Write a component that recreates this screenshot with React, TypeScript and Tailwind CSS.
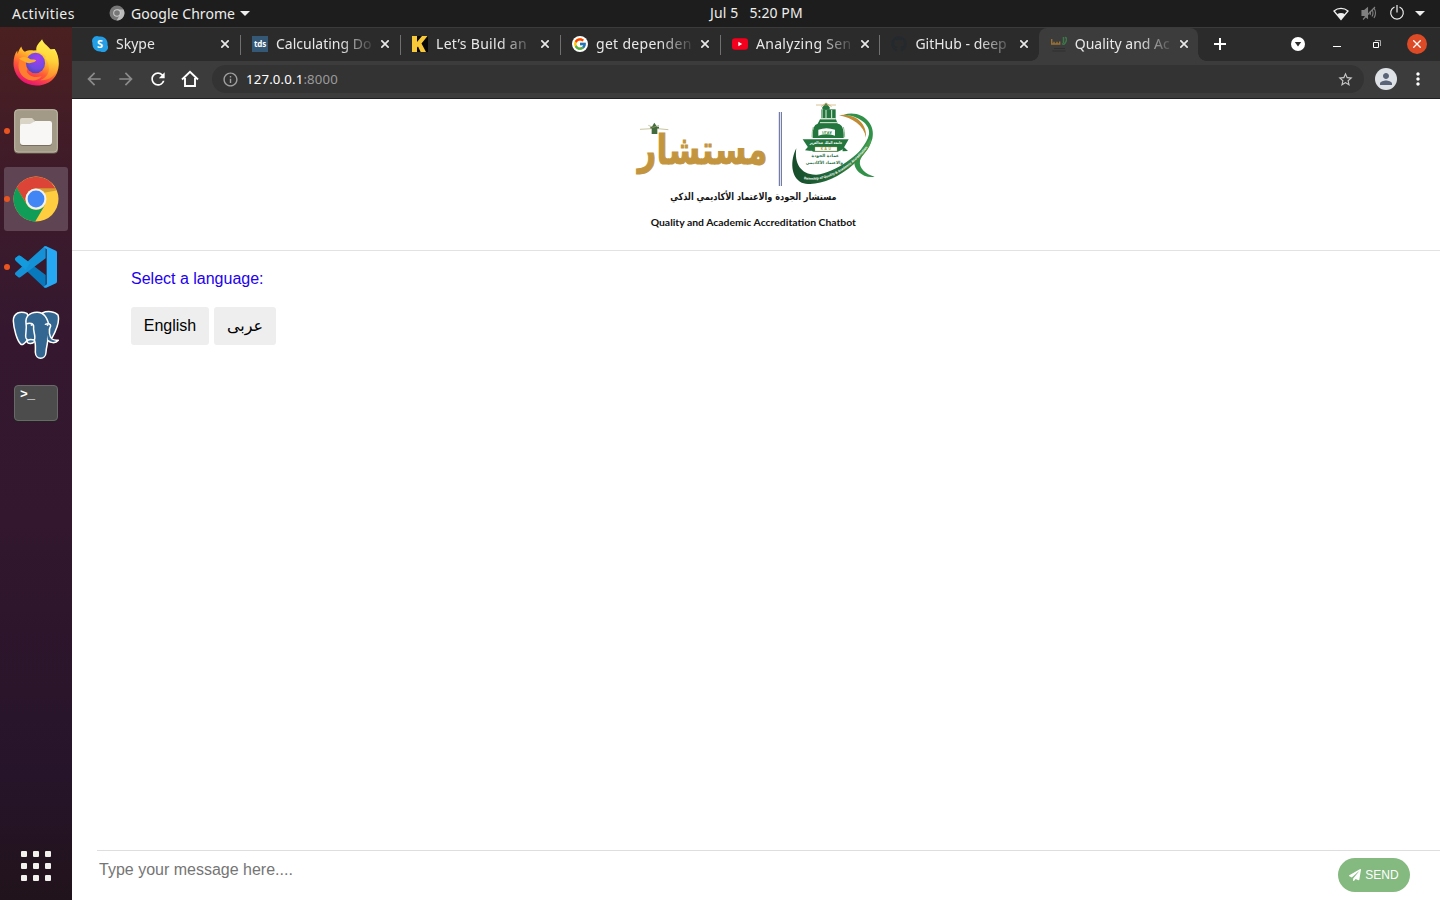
import React from "react";
import { FcGoogle } from "react-icons/fc";
import { FaGithub, FaPaperPlane } from "react-icons/fa";
import { MdArrowBack, MdArrowForward, MdRefresh, MdStarBorder, MdInfoOutline, MdMoreVert, MdPerson } from "react-icons/md";

const FirefoxIcon = () => (
  <svg width="46" height="47" viewBox="39 32 139 141" className="-mt-[2px]">
    <defs>
      <linearGradient id="ffBody" x1="0.8" y1="0" x2="0.25" y2="1">
        <stop offset="0" stopColor="#fff44f" />
        <stop offset="0.35" stopColor="#ffb52a" />
        <stop offset="0.62" stopColor="#ff5a36" />
        <stop offset="1" stopColor="#e6067b" />
      </linearGradient>
      <linearGradient id="ffTail" x1="0.5" y1="0" x2="0.4" y2="1">
        <stop offset="0" stopColor="#fff350" />
        <stop offset="0.5" stopColor="#ffd23a" />
        <stop offset="1" stopColor="#ff7a2c" />
      </linearGradient>
      <radialGradient id="ffGlobe" cx="0.6" cy="0.3" r="0.8">
        <stop offset="0" stopColor="#a23cf0" />
        <stop offset="0.6" stopColor="#6f4be0" />
        <stop offset="1" stopColor="#4a3fa8" />
      </radialGradient>
    </defs>
    <path d="M64 54C66 62 70 67 75 70C82 66 92 65 100 66L165 62C179 84 181 110 172 134C161 160 137 172 109 172C75 172 46 150 41 114C39 93 44 75 52 66L53 77C55 69 59 60 64 54Z" fill="url(#ffBody)" />
    <path d="M127 32C131 48 149 52 157 71L160 63C174 79 179 105 173 124C164 148 143 158 121 156C134 151 144 142 147 128C150 110 143 95 134 88L140 86C133 78 123 71 111 69C104 55 119 42 127 32Z" fill="url(#ffTail)" />
    <path d="M62 89C72 84 84 87 91 93C98 94 106 93 109 96C106 105 96 104 88 110C83 119 80 122 81 131C88 144 108 151 126 143C116 159 90 162 71 146C54 132 51 106 62 89Z" fill="#ff7e2f" />
    <ellipse cx="107" cy="104" rx="29" ry="31" fill="url(#ffGlobe)" />
    <path d="M57 91C67 84 82 84 91 93C98 94 106 93 109 96C106 103 96 103 88 105C77 103 68 97 57 91Z" fill="#ffae2b" />
  </svg>
);

const FilesIcon = () => (
  <svg width="46" height="46" viewBox="0 0 46 46">
    <rect x="1" y="1.5" width="44" height="44" rx="4" fill="#77705f" />
    <rect x="1.7" y="1.7" width="42.6" height="42.4" rx="3.5" fill="#a29a86" stroke="#c2bba8" />
    <path d="M7 12q0-2 2-2h10l3 3v6H7Z" fill="#d9d4c5" />
    <path d="M7 19q0-2 2-2h8l5-4h15q2 0 2 2v20q0 3-3 3H10q-3 0-3-3Z" fill="#78705e" />
    <path d="M7 18q0-2 2-2h8l5-3h15q2 0 2 2v19q0 3-3 3H10q-3 0-3-3Z" fill="#f8f7f5" />
  </svg>
);

const ChromeIcon = () => (
  <svg width="46" height="46" viewBox="0 0 46 46">
    <circle cx="23" cy="23" r="22.5" fill="#ffcd40" />
    <path d="M3.5 11.8A22.5 22.5 0 0 1 42.5 12.5H23A10.7 10.7 0 0 0 13.6 28Z" fill="#db4437" />
    <path d="M3.7 11.5A22.5 22.5 0 0 0 22.2 45.5L32.3 28.5A10.8 10.8 0 0 1 13.5 28Z" fill="#0f9d58" />
    <path d="M23 12.5h19.5l.9 2-14 2.5Z" fill="#a87422" opacity=".5" />
    <circle cx="23" cy="23" r="10.5" fill="#f1f1f1" />
    <circle cx="23" cy="23" r="8.4" fill="#4285f4" />
  </svg>
);

const CodeIcon = () => (
  <svg width="44" height="44" viewBox="42 27 132 132">
    <path d="M46 66L55 59Q58 57 62 60L137 117V156Q134 156 131 153L48 75Q43 71 46 66Z" fill="#0879bd" />
    <path d="M46 116L55 124Q58 126 62 123L137 67V30Q134 30 131 33L48 108Q43 112 46 116Z" fill="#1592d7" />
    <path d="M46 66L55 59Q58 57 62 60L90 81L77 101L48 75Q43 71 46 66Z" fill="#149bde" />
    <path d="M137 30L168 44Q171 46 171 50V136Q171 140 168 142L137 156Q141 153 141 148V38Q141 33 137 30Z" fill="#27a8f2" />
    <path d="M131 33Q137 28 141 33V153Q137 158 131 153L140 145V40Z" fill="#27a8f2" />
  </svg>
);

const ElephantIcon = () => (
  <svg width="48" height="50" viewBox="37 223 144 150">
    <g fill="#336791" stroke="#fff" strokeWidth="4.5" strokeLinejoin="round" strokeLinecap="round">
      <path d="M82 233C62 225 41 231 41 256C42 278 52 316 64 326C70 330 76 321 83 313L92 265Z" />
      <path d="M128 232C143 225 166 227 175 238C181 257 168 287 157 307L146 309L130 280Z" />
      <path d="M79 262C77 242 89 231 111 230C135 229 145 248 149 278C150 290 144 299 144 309C146 321 140 329 139 350C138 374 108 374 107 350C107 337 109 325 104 313C97 321 83 317 79 307C75 296 83 284 79 262Z" />
      <path d="M81 264C90 261 102 263 102 273C99 286 110 302 104 313C95 311 84 310 81 318C87 327 99 324 104 318M137 266C147 262 153 266 153 271C145 283 150 304 157 310C163 314 169 313 176 314C166 326 151 320 145 315" />
      <circle cx="95" cy="268" r="1.5" strokeWidth="3" />
      <circle cx="143" cy="268" r="1.5" strokeWidth="3" />
    </g>
  </svg>
);

const TerminalIcon = () => (
  <div className="flex h-9 w-11 rounded border border-[#686968] bg-[#4b4c4b] pl-[5px] font-['Liberation_Mono'] text-[13px] font-bold leading-[17px] tracking-[-0.5px] text-white shadow-[0_1px_1px_#242323]">
    &gt;_
  </div>
);

const dockItems = [
  { icon: <FirefoxIcon />, running: false, active: false },
  { icon: <FilesIcon />, running: true, active: false },
  { icon: <ChromeIcon />, running: true, active: true },
  { icon: <CodeIcon />, running: true, active: false },
  { icon: <ElephantIcon />, running: false, active: false },
  { icon: <TerminalIcon />, running: false, active: false },
];

const Dock = () => (
  <aside className="flex w-[72px] shrink-0 flex-col items-center gap-1 bg-[linear-gradient(#4b2020_0px,#3e1b2a_150px,#35182f_300px,#32172e_500px,#26142a_750px,#21131b_873px)] pt-1">
    {dockItems.map((item, i) => (
      <div key={i} className={`relative flex size-16 items-center justify-center rounded-[3px] ${item.active ? "bg-[#5f4453]" : ""}`}>
        {item.running && <span className="absolute top-[29px] left-0 size-1.5 rounded-full bg-[#e95420]" />}
        {item.icon}
      </div>
    ))}
    <div className="mt-auto mb-[19px] grid grid-cols-3 gap-1.5">
      {Array.from({ length: 9 }, (_, i) => (
        <span key={i} className="size-1.5 rounded-[1px] bg-[#f2f1ed]" />
      ))}
    </div>
  </aside>
);

const SystemBar = () => (
  <header className="flex h-[27px] shrink-0 items-center bg-[#1d1d1d] font-['Noto_Sans',sans-serif] text-[14px] text-[#eeeeec]">
    <div className="flex w-[710px] items-center pl-3">
      <span className="w-[97px] tracking-[0.45px]">Activities</span>
      <svg width="16" height="16" viewBox="0 0 16 16" className="-mt-px">
        <circle cx="8" cy="8" r="7.5" fill="#777" />
        <path d="M8 4.5h6.5A7.5 7.5 0 0 1 7.5 15.5l3.2-5.2Z" fill="#bbb" />
        <circle cx="8" cy="8" r="3.8" fill="#ccc" />
        <circle cx="8" cy="8" r="2.8" fill="#777" />
      </svg>
      <span className="ml-1.5 w-[109px] whitespace-nowrap tracking-[0.05px]">Google Chrome</span>
      <svg width="10" height="5" viewBox="0 0 10 5"><path d="M0 0h10L5 5Z" fill="#eee" /></svg>
    </div>
    <span className="-mt-0.5 whitespace-pre text-[14px] tracking-[0.1px]">Jul 5   5:20 PM</span>
    <div className="mr-[15px] ml-auto flex items-center">
      <svg width="16" height="14" viewBox="0 0 16 14" className="mr-3">
        <path d="M1 4C5 .5 11 .5 15 4L8 12.5Z" fill="none" stroke="#eee" strokeWidth="1.3" />
        <path d="M4 7.3Q8 4.5 12 7.3L8 12.5Z" fill="#eee" />
      </svg>
      <svg width="16" height="16" viewBox="0 0 16 16" className="mr-3 -mt-px" fill="none" stroke="#808080" strokeWidth="1.1">
        <path d="M1 5.5h2.5L6.5 3v10l-3-2.5H1Z" fill="#808080" />
        <path d="M9 6q1 2 0 4M11 4.5q2 3.5 0 7M13 3q3 5 0 10M2 14.5L14 2" />
      </svg>
      <svg width="16" height="16" viewBox="0 0 16 16" className="mr-[10px] -mt-px" fill="none" stroke="#eee" strokeWidth="1.2">
        <path d="M5.5 2A6.3 6.3 0 1 0 10.5 2M8 0v7.5" />
      </svg>
      <svg width="10" height="5" viewBox="0 0 10 5"><path d="M0 0h10L5 5Z" fill="#eee" /></svg>
    </div>
  </header>
);

const CloseIcon = () => (
  <svg width="8" height="8" viewBox="0 0 8 8" fill="none" stroke="currentColor" strokeWidth="1.7" className="shrink-0">
    <path d="M.3.3l7.4 7.4M7.7.3L.3 7.7" />
  </svg>
);

const SkypeIcon = () => (
  <svg width="16" height="16" viewBox="0 0 16 16">
    <path d="M5 0A5 5 0 0 0 .5 7A7.5 7.5 0 0 0 8.5 15.5A5 5 0 0 0 15.5 9A7.5 7.5 0 0 0 7 .5Z" fill="#249fe5" />
    <text x="8" y="12" textAnchor="middle" fontFamily="Noto Sans" fontWeight="700" fontSize="11" fill="#fff">S</text>
  </svg>
);
const KIcon = () => (
  <svg width="16" height="16" viewBox="0 0 16 16">
    <path fill="#080808" d="M0 0h16v16H0z" />
    <path fill="#f8c83b" d="M0 0h5v6l5-6h5.5L9.5 7.5 14 16H8.7L6 10.5l-1 1V16H0z" />
  </svg>
);
const YoutubeIcon = () => (
  <svg width="16" height="16" viewBox="0 0 16 16">
    <rect y="2.2" width="16" height="11.6" rx="3" fill="#f4001e" />
    <path d="M6.3 5.8v4.4L10.2 8Z" fill="#fff" />
  </svg>
);
const SiteIcon = () => (
  <svg width="16" height="16" viewBox="0 0 16 16" fill="none">
    <path d="M.7 3v5h8V5.5M3 7.5V5.7M6 7.5V5.7" stroke="#9a7133" strokeWidth="1.4" />
    <path d="M11 7.5q2.5 2 4-2T14 1.5M12.5 1v6" stroke="#3b7749" strokeWidth="1.5" />
    <path d="M3 12.5h11M1.5 15h13" stroke="#2d2b2c" strokeWidth=".8" />
  </svg>
);

const tabs = [
  { title: "Skype", icon: <SkypeIcon /> },
  { title: "Calculating Do", icon: <span className="flex size-4 items-center justify-center bg-[#355876] pb-px text-[8px] font-bold tracking-tight text-white">tds</span> },
  { title: "Let’s Build an", icon: <KIcon /> },
  { title: "get dependen", icon: <span className="flex size-4 items-center justify-center rounded-full bg-white"><FcGoogle size={14} /></span> },
  { title: "Analyzing Sen", icon: <YoutubeIcon /> },
  { title: "GitHub - deep", icon: <FaGithub size={16} color="#24292e" /> },
  { title: "Quality and Ac", icon: <SiteIcon /> },
];

const TabStrip = () => (
  <div className="flex h-[34px] border-t border-[#3b3b3b] bg-[#2b2b2b] pl-2 font-['Noto_Sans',sans-serif] text-[14px] text-[#e8e8e8]">
    {tabs.map((tab, i) => (
      <div
        key={tab.title}
        className={`relative flex shrink-0 items-center pl-3 ${i < 4 ? "w-40" : "w-[159.4px]"} ${i === 6 ? "rounded-t-lg bg-[#3c3c3c]" : ""}`}
      >
        {i === 6 && (
          <>
            <span className="absolute bottom-0 -left-2 size-2 bg-[radial-gradient(circle_at_0_0,transparent_7.5px,#3c3c3c_8px)]" />
            <span className="absolute -right-2 bottom-0 size-2 bg-[radial-gradient(circle_at_100%_0,transparent_7.5px,#3c3c3c_8px)]" />
          </>
        )}
        <span className="-mt-px flex size-4 shrink-0">{tab.icon}</span>
        <span className={`-mt-[3px] ml-2 w-[98px] overflow-hidden whitespace-nowrap [mask-image:linear-gradient(to_right,black_64px,transparent_100px)] ${i === 2 || i === 3 || i === 4 ? "tracking-[0.3px]" : ""}`}>
          {tab.title}
        </span>
        <span className="-mt-px ml-[7px] flex"><CloseIcon /></span>
        {i < 5 && <span className="absolute top-[7px] right-[-1px] h-5 w-px bg-[#707070]" />}
      </div>
    ))}
    <svg width="12" height="12" viewBox="0 0 12 12" className="mt-2.5 ml-4" stroke="#fff" strokeWidth="2">
      <path d="M0 6h12M6 0v12" />
    </svg>
    <div className="mr-[13px] ml-auto flex items-center pb-px">
      <svg width="14" height="14" viewBox="0 0 14 14" className="mr-7">
        <circle cx="7" cy="7" r="7" fill="#fff" /><path d="M3.8 5h6.4L7 9.5Z" fill="#2b2b2b" />
      </svg>
      <span className="mt-[5px] mr-8 h-px w-2 bg-white" />
      <svg width="8" height="8" viewBox="0 0 8 8" className="mr-[26px]" fill="none">
        <path d="M2 .5h5.5V6" stroke="#aaa" /><path d="M.5 2.5h5v5h-5Z" stroke="#fff" />
      </svg>
      <span className="flex size-5 items-center justify-center rounded-full bg-[#dd4b26] text-white">
        <svg width="8" height="8" viewBox="0 0 8 8" stroke="currentColor" strokeWidth="1.3"><path d="M.3.3l7.4 7.4M7.7.3L.3 7.7" /></svg>
      </span>
    </div>
  </div>
);

const Toolbar = () => (
  <div className="flex h-[38px] items-center border-b border-[#211f23] bg-[#3c3c3c] pb-px pl-3 text-white">
    <MdArrowBack size={20} color="#8b8b8b" />
    <MdArrowForward size={20} color="#8b8b8b" className="ml-3" />
    <MdRefresh size={20} className="ml-3" />
    <svg width="18" height="18" viewBox="0 0 18 18" className="ml-[13px]" fill="none" stroke="#fff" strokeWidth="1.9">
      <path d="M1 9.5L9 1.8l8 7.7M4 8v8h10V8" />
    </svg>
    <div className="ml-[13px] flex h-7 w-[1152px] items-center rounded-full bg-[#333333] pr-2.5 pl-2.5">
      <MdInfoOutline size={17} color="#a0a0a0" />
      <span className="mt-px ml-[7px] font-['Noto_Sans',sans-serif] text-[13.2px] tracking-[0.17px]">
        127.0.0.1<span className="text-[#9b9b9b]">:8000</span>
      </span>
      <MdStarBorder size={17} color="#c7c7c7" className="ml-auto" />
    </div>
    <span className="ml-[11px] flex size-[22px] items-center justify-center rounded-full bg-[#dee1e6]"><MdPerson size={18} color="#5a6378" /></span>
    <MdMoreVert size={20} className="ml-[11px]" />
  </div>
);

const SiteLogo = () => (
  <svg width="260" height="140" viewBox="0 0 780 420" role="img" aria-label="Logo">
    <defs>
      <linearGradient id="swoosh" x1="0" x2="1">
        <stop offset="0" stopColor="#174c2b" /><stop offset="0.6" stopColor="#24703d" /><stop offset="1" stopColor="#4aa150" />
      </linearGradient>
    </defs>
    <text transform="translate(233 199) scale(.795 1)" textAnchor="middle" direction="rtl" fontFamily="DejaVu Sans" fontWeight="700" fontSize="122" fill="#c4953f" stroke="#c4953f" strokeWidth="3">مستشار</text>
    <g fill="#426b3d">
      <path d="M80 88l8-14 9 14v20H80Z" />
      <path d="M76 86h26v6H76Z" />
    </g>
    <path d="M45 94l35-2M98 92l32 3M70 82l14 6 18-6" stroke="#aaa56f" strokeWidth="2" fill="none" />
    <path d="M463 42v222M469 42v222" stroke="#37437e" strokeWidth="2.5" />
    <g transform="translate(3 -3)">
      <g fill="#24763f">
        <path d="M589 31l11-14 11 14v7h-22Z" />
        <path d="M585 37h44v28h-44Z" />
        <path d="M582 67h48l5 13q20 2 18 43h-93q-2-40 15-43Z" />
        <path d="M530 127h138l-15 26q-6 9-18 11H563q-12-3-18-15Z" />
        <path d="M550 145l-13 15 18 2Z" /><path d="M648 145l18 17-16 1Z" />
      </g>
      <path d="M577 98q24-9 50 0v18q-25-8-50 0Z" fill="#fff" />
      <path d="M588 36v28M600 39v24M617 39v24M584 65h45M582 77h51" stroke="#e6efdc" strokeWidth="3" />
      <path d="M562 90q-4 12-4 31M652 90q4 12 4 31" stroke="#8fbc91" strokeWidth="3" fill="none" />
      <path d="M570 24h60M585 29l15-11 17 11" stroke="#c9a460" strokeWidth="2" fill="none" />
      <text x="602" y="111" textAnchor="middle" fontFamily="DejaVu Sans" fontWeight="700" fontSize="13" fill="#3c8e4c">١٣٨٧</text>
      <text transform="translate(600 142) scale(.75 1)" textAnchor="middle" direction="rtl" fontFamily="DejaVu Sans" fontWeight="700" fontSize="12" fill="#fff">جامعة الملك عبدالعزيز</text>
      <path d="M567 150h66v12h-66Z" fill="#fff" stroke="#c6a25c" />
      <text x="602" y="160" textAnchor="middle" fontFamily="Noto Sans" fontWeight="700" fontSize="10" letterSpacing="5" fill="#a99543">KAU</text>
      <text x="598" y="181" textAnchor="middle" direction="rtl" fontFamily="DejaVu Sans" fontWeight="700" fontSize="13" fill="#287044">عمادة الجودة</text>
      <text transform="translate(595 202) scale(.92 1)" textAnchor="middle" direction="rtl" fontFamily="DejaVu Sans" fontWeight="700" fontSize="13" fill="#287044">والاعتماد الأكاديمي</text>
    </g>
    <g transform="translate(4 -3)">
      <path d="M638 55C677 46 724 75 719 122C713 86 678 62 638 55Z" fill="#bf8b35" />
      <path d="M652 53C708 37 749 82 738 125C729 157 706 173 701 191C697 213 717 231 745 239C709 245 683 217 684 197C687 169 722 145 728 112C733 83 697 55 652 53Z" fill="#329149" />
      <path d="M510 154C491 190 493 241 526 257C565 271 630 248 682 202C715 171 739 147 733 124C702 172 625 229 571 233C524 235 503 199 510 154Z" fill="url(#swoosh)" />
      <path id="logoArc" d="M532 246C605 260 680 210 730 143" fill="none" />
      <text fontFamily="Noto Sans" fontWeight="700" fontSize="9.8" fill="#fff"><textPath href="#logoArc" textLength="225" lengthAdjust="spacingAndGlyphs">Deanship of Quality &amp; Academic Accreditation</textPath></text>
    </g>
    <text transform="translate(385 307) scale(.815 1)" textAnchor="middle" direction="rtl" fontFamily="DejaVu Sans" fontWeight="700" fontSize="30" fill="#161616">مستشار الجودة والاعتماد الأكاديمي الذكي</text>
    <text x="77" y="384" textLength="616" lengthAdjust="spacingAndGlyphs" fontFamily="Lato" fontWeight="700" fontSize="28" fill="#111">Quality and Academic Accreditation Chatbot</text>
  </svg>
);

export default function App() {
  return (
    <div className="flex h-[900px] w-[1440px] flex-col overflow-hidden bg-white">
      <SystemBar />
      <div className="flex min-h-0 flex-1">
        <Dock />
        <div className="flex min-w-0 flex-1 flex-col font-['Liberation_Sans',Arial,sans-serif]">
          <TabStrip />
          <Toolbar />
          <header className="flex h-[152px] shrink-0 justify-center border-b border-[#e2e2e2]">
            <div className="-mt-px -ml-0.5"><SiteLogo /></div>
          </header>
          <main className="flex-1 px-[59px] pt-4 text-base">
            <p className="leading-6 text-[#2200ee]">Select a language:</p>
            <div className="mt-4 flex gap-[5px] text-black">
              <button className="h-[38px] w-[78px] rounded-[3px] bg-[#eeeeee]">English</button>
              <button className="h-[38px] w-[62px] rounded-[3px] bg-[#eeeeee] font-['Liberation_Sans','DejaVu_Sans',sans-serif]">عربى</button>
            </div>
          </main>
          <form className="ml-[25px] flex h-[50px] border-t border-[#dedede]">
            <input className="h-[37px] flex-1 pl-0.5 text-base outline-none placeholder:text-[#757575]" placeholder="Type your message here...." />
            <button type="button" className="mt-[7px] mr-[30px] flex h-[34px] w-[72px] items-center justify-center gap-1 rounded-full bg-[#84b97f] text-xs text-white">
              <FaPaperPlane size={12} /> SEND
            </button>
          </form>
        </div>
      </div>
    </div>
  );
}
